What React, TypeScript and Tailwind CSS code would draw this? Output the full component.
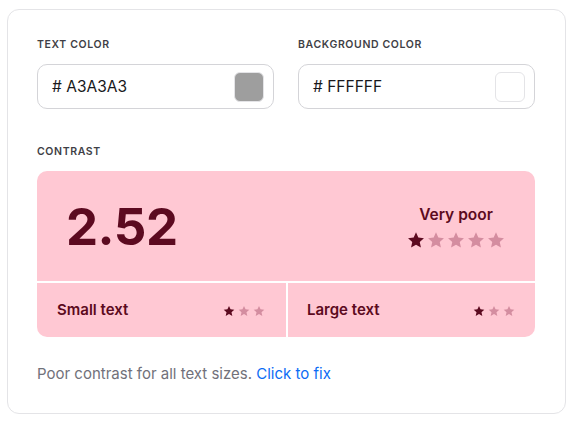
import { useState } from "react";

function Star({ size, filled }: { size: number; filled: boolean }) {
  return (
    <svg width={size} height={size} viewBox="0 0 24 24" className={filled ? "text-[#5c0a20]" : "text-[#d48da0]"}>
      <path
        fill="currentColor"
        d="M12 1.8l3.1 6.9 7.5.8-5.6 5.1 1.6 7.4L12 18.2 5.4 22l1.6-7.4L1.4 9.5l7.5-.8z"
      />
    </svg>
  );
}

function Stars({ count, total, size, gap }: { count: number; total: number; size: number; gap: string }) {
  return (
    <div className={`flex items-center ${gap}`}>
      {Array.from({ length: total }).map((_, i) => (
        <Star key={i} size={size} filled={i < count} />
      ))}
    </div>
  );
}

function ColorField({ label, value, swatch }: { label: string; value: string; swatch: string }) {
  return (
    <div className="flex-1">
      <div className="text-[10.5px] font-semibold tracking-[0.06em] text-[#3f3f46] leading-[14px]">{label}</div>
      <div className="mt-[12px] flex h-[45px] items-center justify-between rounded-[10px] border border-[#d4d4d8] pl-[14px] pr-[9px]">
        <span className="text-[15.5px] text-[#18181b]">
          # {value}
        </span>
        <span className="h-[30px] w-[30px] rounded-[6px] border border-[#e4e4e7]" style={{ backgroundColor: swatch }} />
      </div>
    </div>
  );
}

export default function App() {
  const [text] = useState("A3A3A3");
  const [bg] = useState("FFFFFF");

  return (
    <div className="min-h-screen bg-white pl-[7px] pt-[9px]" style={{ fontFamily: "Inter, 'Noto Sans', sans-serif" }}>
      <div className="w-[559px] rounded-[12px] border border-[#e4e4e7] pl-[29px] pr-[30px] pt-[28px] pb-[27px]">
        <div className="flex gap-[24px]">
          <ColorField label="TEXT COLOR" value={text} swatch="#9e9e9e" />
          <ColorField label="BACKGROUND COLOR" value={bg} swatch="#ffffff" />
        </div>

        <div className="mt-[36px] text-[10.5px] font-semibold tracking-[0.06em] text-[#3f3f46] leading-[14px]">CONTRAST</div>

        <div className="mt-[12px] overflow-hidden rounded-[10px] bg-[#ffc8d3] text-[#5c0a20]">
          <div className="flex h-[110px] items-center justify-between pl-[29px] pr-[30px]">
            <div className="text-[51px] font-bold leading-none tracking-[-0.01em]">2.52</div>
            <div className="flex flex-col items-center">
              <div className="text-[15.5px] font-semibold">Very poor</div>
              <div className="mt-[5px]">
                <Stars count={1} total={5} size={18} gap="gap-[2px]" />
              </div>
            </div>
          </div>
          <div className="flex h-[56px] border-t-2 border-white">
            <div className="flex flex-1 items-center justify-between border-r-2 border-white pl-[20px] pr-[21px] pt-[1px]">
              <span className="text-[15px] font-semibold">Small text</span>
              <Stars count={1} total={3} size={12} gap="gap-[3px]" />
            </div>
            <div className="flex flex-1 items-center justify-between pl-[19px] pr-[20px] pt-[1px]">
              <span className="text-[15px] font-semibold">Large text</span>
              <Stars count={1} total={3} size={12} gap="gap-[3px]" />
            </div>
          </div>
        </div>

        <p className="mt-[26px] text-[15px] text-[#71717a]">
          Poor contrast for all text sizes. <a className="text-[#0b6cf5] cursor-pointer">Click to fix</a>
        </p>
      </div>
    </div>
  );
}
